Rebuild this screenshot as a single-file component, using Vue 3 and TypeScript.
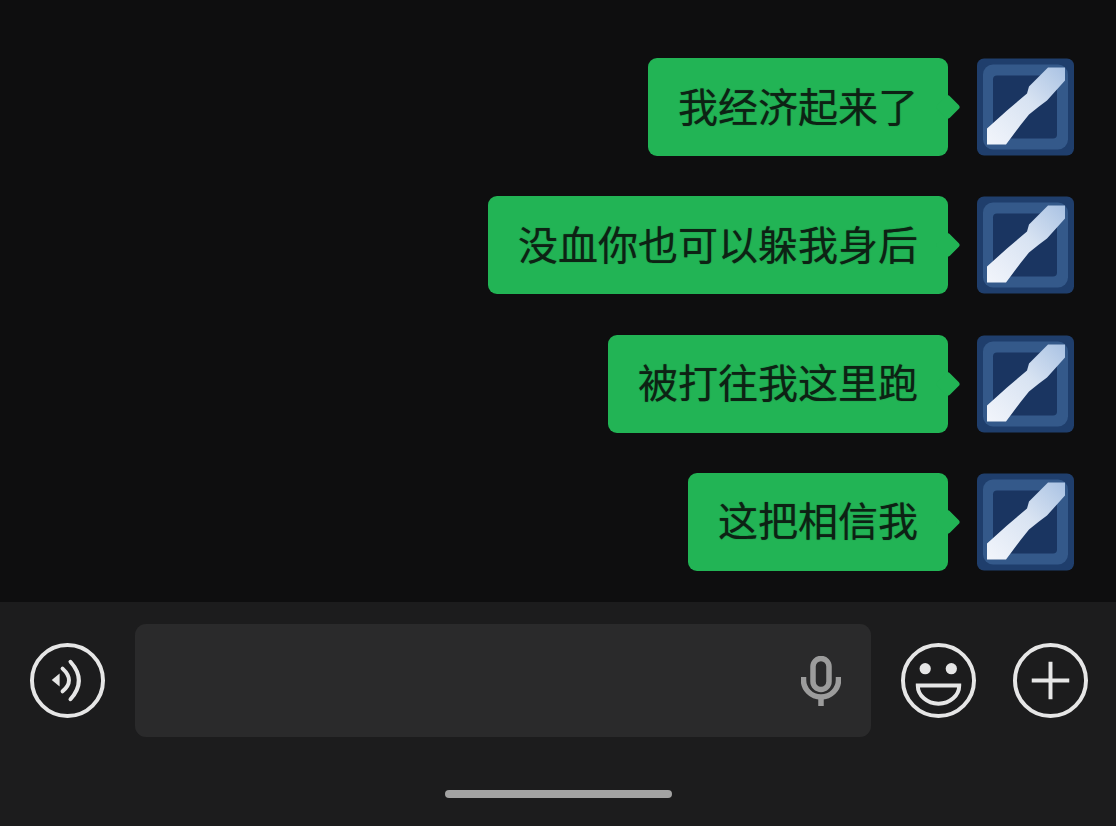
<script setup lang="ts">
const messages: string[] = [
  "我经济起来了",
  "没血你也可以躲我身后",
  "被打往我这里跑",
  "这把相信我",
];
</script>

<template>
  <div class="chat">
    <div class="chat__messages">
      <div v-for="(msg, i) in messages" :key="msg" class="row">
        <div class="bubble">{{ msg }}</div>
        <svg class="avatar" viewBox="0 0 97 97" aria-hidden="true">
          <defs>
            <linearGradient :id="`slash-${i}`" x1="0" y1="1" x2="1" y2="0">
              <stop offset="0" stop-color="#f2f5fb" />
              <stop offset="0.55" stop-color="#d8e3f2" />
              <stop offset="1" stop-color="#a9c2e3" />
            </linearGradient>
          </defs>
          <rect width="97" height="97" rx="7" fill="#1f3e6c" />
          <rect x="6" y="6" width="85" height="85" rx="10" fill="#34598a" />
          <rect x="16" y="17" width="64" height="63" rx="4" fill="#1a3561" />
          <polygon
            points="71,9 88,9 88,22 70,42 62,48 52,56 44,66 29,86 10,86 10,70 30,52 50,35 52,28"
            :fill="`url(#slash-${i})`"
          />
        </svg>
      </div>
    </div>

    <div class="chat__bar">
      <svg class="icon" viewBox="0 0 76 76" aria-hidden="true">
        <circle cx="38" cy="38" r="36" class="line" />
        <path d="M22 37.5 L30 31 V44 Z" fill="#e6e6e6" />
        <path d="M33 26 Q46 38 33 49" class="line line--cap" />
        <path d="M41 19 Q58 38 41 57" class="line line--cap" />
      </svg>

      <div class="input">
        <svg class="mic" viewBox="0 0 40 50" aria-hidden="true">
          <rect x="12" y="2.5" width="16" height="31" rx="8" class="mic__line" />
          <path d="M2.5 21 V24 C2.5 33 10 41 20 41 C30 41 37.5 33 37.5 24 V21" class="mic__line" />
          <path d="M20 41 V50" class="mic__line" />
        </svg>
      </div>

      <svg class="icon icon--smile" viewBox="0 0 76 76" aria-hidden="true">
        <circle cx="38" cy="38" r="36" class="line" />
        <circle cx="24.5" cy="26" r="5.7" fill="#e6e6e6" />
        <circle cx="51" cy="26" r="5.7" fill="#e6e6e6" />
        <path d="M17 43 H59 A21 18.5 0 0 1 17 43 Z" class="line" />
      </svg>

      <svg class="icon" viewBox="0 0 76 76" aria-hidden="true">
        <circle cx="38" cy="38" r="36" class="line" />
        <path d="M38 19 V57 M19 38 H57" class="line" />
      </svg>
    </div>

    <div class="chat__home">
      <div class="home-bar"></div>
    </div>
  </div>
</template>

<style scoped>
.chat {
  width: 1116px;
  height: 826px;
  display: flex;
  flex-direction: column;
  background: #0e0e0f;
  overflow: hidden;
  font-family: "Noto Sans CJK SC", "Liberation Sans", sans-serif;
}

.chat__messages {
  height: 602px;
  flex: none;
  padding: 58px 42px 0 0;
  box-sizing: border-box;
  display: flex;
  flex-direction: column;
  gap: 40.3px;
}

.row {
  display: flex;
  justify-content: flex-end;
  align-items: stretch;
  gap: 29px;
  height: 98px;
}

.bubble {
  position: relative;
  padding: 0 30px 5px;
  display: flex;
  align-items: center;
  font-size: 40px;
  line-height: 1;
  color: #0d2214;
  text-shadow: 0 0 1px rgba(13, 34, 20, 0.6);
  background: #22b455;
  border-radius: 9px;
}

.bubble::after {
  content: "";
  position: absolute;
  top: 50%;
  right: -9px;
  width: 18px;
  height: 18px;
  margin-top: -9px;
  background: #22b455;
  border-radius: 3px;
  transform: rotate(45deg);
}

.avatar {
  width: 97px;
  height: 98px;
  flex: none;
  filter: blur(0.6px);
}

.chat__bar {
  height: 157px;
  flex: none;
  box-sizing: border-box;
  padding: 22px 28px 0 30px;
  display: flex;
  align-items: flex-start;
  background: #1c1c1d;
}

.icon {
  width: 75px;
  height: 75px;
  flex: none;
  margin-top: 19px;
}

.icon--smile {
  margin-left: 30px;
  margin-right: 37px;
}

.line {
  fill: none;
  stroke: #e6e6e6;
  stroke-width: 4;
}

.line--cap {
  stroke-linecap: round;
}

.input {
  width: 736px;
  height: 113px;
  margin-left: 30px;
  box-sizing: border-box;
  padding-right: 30px;
  display: flex;
  align-items: center;
  justify-content: flex-end;
  background: #2a2a2b;
  border-radius: 11px;
  flex: none;
}

.mic {
  width: 40px;
  height: 50px;
  margin-top: 1px;
}

.mic__line {
  fill: none;
  stroke: #9c9c9c;
  stroke-width: 5.5;
}

.chat__home {
  flex: 1;
  display: flex;
  justify-content: center;
  background: #1c1c1d;
  padding-top: 31px;
  box-sizing: border-box;
}

.home-bar {
  width: 227px;
  height: 8px;
  border-radius: 4px;
  background: #a3a3a3;
}
</style>
